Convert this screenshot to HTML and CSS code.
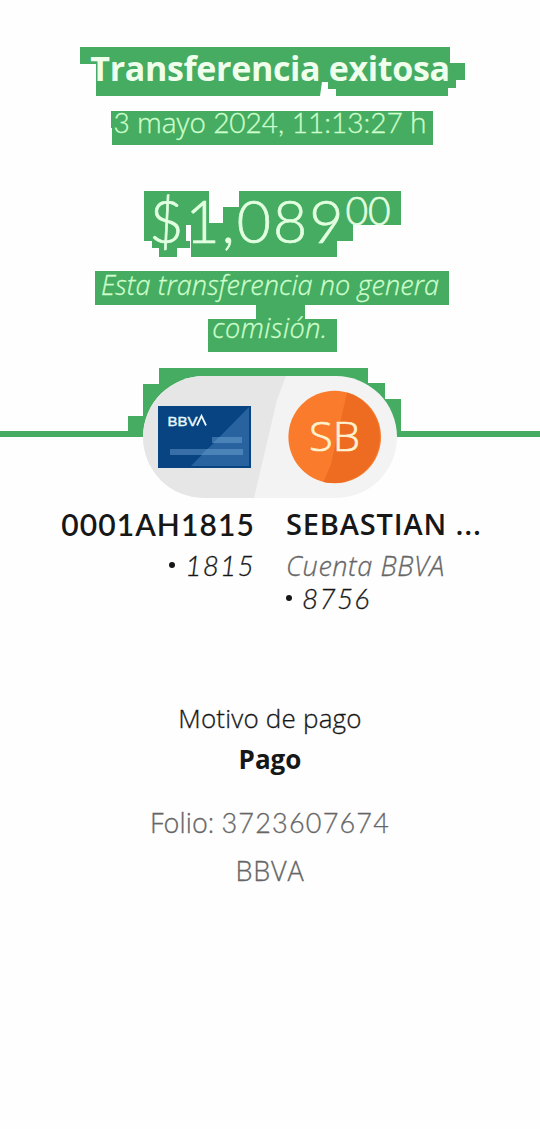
FILE: index.html
```html
<!DOCTYPE html>
<html lang="es">
<head>
<meta charset="utf-8">
<title>Transferencia exitosa</title>
<link rel="stylesheet" href="styles.css">
</head>
<body>
<main class="receipt">
  <svg class="backdrop" viewBox="0 0 540 440" aria-hidden="true">
    <path d="M80 47H450V63H465V80H456V88H448V96H336V89H328V82H322L320 96H96V64H80Z"/>
    <path d="M111 111H433V145H112V128H111Z"/>
    <path d="M144 191H209V223H223V207H239V191H401V225H353V241H337V257H191V225H186V241H190V248H177V257H159V248H152V241H144Z"/>
    <path d="M95 271H449V305H305V319H337V352H208V319H256V305H95Z"/>
    <path d="M0 431H128V416H143V384H159V368H368V383H385V399H401V431H540V437H0Z"/>
  </svg>
  <header class="summary">
    <h1 class="title">Transferencia exitosa</h1>
    <p class="date"><span class="num">3</span> mayo <span class="num">2024, 11:13:27</span> h</p>
    <p class="amount"><span class="whole">$1,089</span><span class="cents">00</span></p>
    <p class="fee"><span class="fee-line">Esta transferencia no genera</span><span class="fee-line fee-end">comisión.</span></p>
  </header>
  <div class="pill">
    <svg class="pill-art" viewBox="0 0 254 122">
      <defs><clipPath id="pill"><rect width="254" height="122" rx="61"/></clipPath></defs>
      <g clip-path="url(#pill)">
        <path fill="#f3f3f3" d="M0 0H254V122H0Z"/>
        <path fill="#e6e6e6" d="M0 0H143L134 24L111 122H0Z"/>
      </g>
      <path fill="#074481" d="M15 30H108V92H15Z"/>
      <path fill="#2863a0" d="M106 31V90H48Z"/>
      <path fill="#386fa8" d="M69 61H99V67H69ZM27 73H100V79H27Z"/>
      <path fill="#4a83b8" d="M76 61H99V67H70ZM64 73H100V79H58Z"/>
      <text class="card-brand" x="24.500" y="49.500" textLength="30" lengthAdjust="spacingAndGlyphs">BBV</text>
      <path fill="none" stroke="#e9faff" stroke-width="1.800" d="M54 49.500L58.500 39.800L63 49.500"/>
      <circle cx="191.700" cy="61" r="46.300" fill="#f97b2b"/>
      <path fill="#ee6c22" d="M204 16.500A46.300 46.300 0 0 1 180.500 106L188 88Z"/>
      <text class="initials" x="166" y="75" textLength="51" lengthAdjust="spacingAndGlyphs">SB</text>
    </svg>
  </div>
  <section class="accounts">
    <div class="account from">
      <p class="name">0001AH1815</p>
      <p class="number"><span class="dot"></span>1815</p>
    </div>
    <div class="account">
      <p class="name holder">SEBASTIAN ...</p>
      <p class="kind">Cuenta BBVA</p>
      <p class="number last"><span class="dot"></span>8756</p>
    </div>
  </section>
  <footer class="details">
    <p class="reason">Motivo de pago</p>
    <p class="concept">Pago</p>
    <p class="folio">Folio: <span class="num">3723607674</span></p>
    <p class="bank">BBVA</p>
  </footer>
</main>
</body>
</html>
```
FILE: styles.css
```css
* { box-sizing: border-box; }
body { margin: 0; background: #fefefe; font-family: "Open Sans", sans-serif; color: #171717; }
p, h1 { margin: 0; white-space: nowrap; font-weight: 300; }
p { -webkit-text-stroke: 0.3px currentColor; }
.receipt { position: relative; width: 540px; height: 1129px; overflow: hidden; }
.backdrop { position: absolute; left: 0; top: 0; width: 540px; height: 440px; fill: #45ac61; }
.num { font-family: Lato, sans-serif; }
.summary { position: relative; height: 376px; padding-top: 48px; text-align: center; color: #e2ffe0; }
.title { height: 55px; line-height: 40px; font-size: 34px; font-weight: 700; letter-spacing: -0.35px; color: #efffec; }
.date { height: 82px; line-height: 38px; font-size: 28px; color: #ceffcc; }
.amount { display: flex; justify-content: center; height: 81px; font-family: Lato, sans-serif; -webkit-text-stroke-width: 0.7px; }
.whole { line-height: 71px; font-size: 59px; letter-spacing: 2px; }
.cents { line-height: 50px; font-size: 39px; margin-left: 0; }
.fee { font-size: 27px; font-style: italic; letter-spacing: 0.1px; color: #ceffcc; }
.fee-line { display: block; height: 43px; line-height: 38px; }
.fee-end { letter-spacing: 0.5px; }
.pill { position: relative; width: 254px; height: 122px; margin-left: 143px; }
.pill-art { display: block; width: 254px; height: 122px; }
.card-brand { font-family: "Liberation Sans", sans-serif; font-size: 13.5px; stroke: #e9faff; stroke-width: 0.4px; fill: #e9faff; }
.initials { font-family: "Open Sans", sans-serif; font-size: 40px; font-weight: 300; fill: #fff2d0; stroke: #fff2d0; stroke-width: 0.6px; }
.accounts { display: grid; grid-template-columns: 254px 254px; column-gap: 32px; width: 540px; height: 196px; padding-top: 6px; }
.name { height: 41px; line-height: 40px; font-size: 29px; font-weight: 600; -webkit-text-stroke-width: 0; }
.holder { letter-spacing: 0.85px; }
.from .name { font-family: Lato, sans-serif; font-size: 30px; letter-spacing: 1.1px; text-align: right; margin-right: -1px; }
.number { display: flex; align-items: center; gap: 10px; height: 40px; font-family: Lato, sans-serif; font-size: 28px; font-style: italic; letter-spacing: 1.2px; }
.from .number { justify-content: flex-end; margin-right: -1px; }
.last { height: 26px; }
.dot { width: 6px; height: 6px; border-radius: 50%; background: #171717; }
.kind { height: 40px; line-height: 42px; font-size: 27px; font-style: italic; letter-spacing: 0.6px; color: #666; }
.details { text-align: center; padding-top: 4px; }
.reason { height: 41px; line-height: 40px; font-size: 26px; letter-spacing: 0.2px; }
.concept { height: 64px; line-height: 40px; font-size: 26px; font-weight: 700; -webkit-text-stroke-width: 0; }
.folio { height: 48px; line-height: 40px; font-size: 27px; letter-spacing: 0.1px; color: #666; }
.folio .num { letter-spacing: 1.2px; }
.bank { line-height: 40px; font-size: 27px; letter-spacing: 0.8px; color: #666; }
```
